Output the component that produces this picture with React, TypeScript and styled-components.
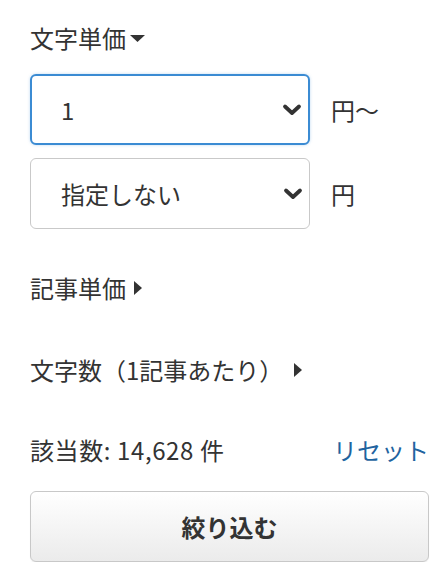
import React from "react";
import styled, { createGlobalStyle, css } from "styled-components";

const GlobalStyle = createGlobalStyle`
	html, body {
		margin: 0;
		padding: 0;
		background: #ffffff;
	}
	body {
		font-family: "Noto Sans CJK JP", "Noto Sans", sans-serif;
		color: #333333;
	}
`;

const Panel = styled.div`
	width: 442px;
	box-sizing: border-box;
	padding: 22px 13px 0 30px;
	display: flex;
	flex-direction: column;
`;

const SectionTitle = styled.div<{ $gap: number }>`
	display: flex;
	align-items: center;
	gap: ${props => props.$gap}px;
	height: 32px;
	font-size: 24px;
	line-height: 32px;
	color: #333333;
`;

const Caret = styled.svg`
	display: block;
	flex: none;
	fill: #333333;
`;

const SelectList = styled.div`
	display: flex;
	flex-direction: column;
	gap: 13px;
	margin-top: 20px;
`;

const SelectRow = styled.div`
	display: flex;
	align-items: center;
	gap: 21px;
`;

const SelectBox = styled.div<{ $focused?: boolean }>`
	position: relative;
	width: 280px;
	height: 71px;
	box-sizing: border-box;
	border-radius: 6px;
	border: 1px solid #c9c9c9;
	background: #ffffff;

	${props => props.$focused && css`
		border: 2px solid #3b8bd3;
		box-shadow: 0 0 3px rgba(59, 139, 211, 0.35);
	`}
`;

const NativeSelect = styled.select<{ $focused?: boolean }>`
	appearance: none;
	-webkit-appearance: none;
	width: 100%;
	height: 100%;
	border: none;
	outline: none;
	background: transparent;
	font-family: "Noto Sans CJK JP", "Noto Sans", sans-serif;
	font-size: 24px;
	color: #333333;
	padding: 0 0 0 ${props => props.$focused ? 29 : 30}px;
	margin: 0;
`;

const Chevron = styled.svg`
	position: absolute;
	right: 6px;
	top: 50%;
	transform: translateY(-50%);
	pointer-events: none;
`;

const Unit = styled.span`
	font-size: 24px;
	color: #333333;
`;

const Count = styled.div`
	display: flex;
	justify-content: space-between;
	align-items: center;
	height: 32px;
	margin-top: 48px;
	font-size: 24px;
	line-height: 32px;
`;

const CountText = styled.span`
	letter-spacing: 0.6px;
`;

const ResetLink = styled.a`
	color: #1f64a0;
	text-decoration: none;
	cursor: pointer;
`;

const SubmitButton = styled.button`
	margin-top: 25px;
	width: 399px;
	height: 71px;
	border: 1px solid #c8c8c8;
	border-radius: 6px;
	background: linear-gradient(#ffffff, #ebebeb);
	box-shadow: 0 1px 1px rgba(0, 0, 0, 0.06);
	font-family: "Noto Sans CJK JP", "Noto Sans", sans-serif;
	font-size: 24px;
	font-weight: 700;
	color: #333333;
	cursor: pointer;
`;

function DownCaret() {
	return (
		<Caret width="15" height="7" viewBox="0 0 15 7">
			<polygon points="0,0 15,0 7.5,7" />
		</Caret>
	);
}

function RightCaret() {
	return (
		<Caret width="8" height="14" viewBox="0 0 8 14">
			<polygon points="0,0 8,7 0,14" />
		</Caret>
	);
}

function PriceSelect({ value, options, focused }: { value: string, options: string[], focused?: boolean }) {
	return (
		<SelectBox $focused={focused}>
			<NativeSelect $focused={focused} defaultValue={value}>
				{options.map(o => <option key={o} value={o}>{o}</option>)}
			</NativeSelect>
			<Chevron width="20" height="14" viewBox="0 0 20 14">
				<polyline points="3,3.5 10,10 17,3.5" fill="none" stroke="#333333" strokeWidth="3.8" strokeLinecap="round" strokeLinejoin="round" />
			</Chevron>
		</SelectBox>
	);
}

export default function App() {
	return (
		<>
			<GlobalStyle />
			<Panel>
				<SectionTitle $gap={4}>
					文字単価
					<DownCaret />
				</SectionTitle>
				<SelectList>
					<SelectRow>
						<PriceSelect value="1" options={["指定しない", "1", "2", "3", "5", "10"]} focused />
						<Unit>円〜</Unit>
					</SelectRow>
					<SelectRow>
						<PriceSelect value="指定しない" options={["指定しない", "1", "2", "3", "5", "10"]} />
						<Unit>円</Unit>
					</SelectRow>
				</SelectList>
				<SectionTitle $gap={8} style={{ marginTop: 43 }}>
					記事単価
					<RightCaret />
				</SectionTitle>
				<SectionTitle $gap={11} style={{ marginTop: 50 }}>
					文字数（1記事あたり）
					<RightCaret />
				</SectionTitle>
				<Count>
					<CountText>該当数: 14,628 件</CountText>
					<ResetLink>リセット</ResetLink>
				</Count>
				<SubmitButton>絞り込む</SubmitButton>
			</Panel>
		</>
	);
}
